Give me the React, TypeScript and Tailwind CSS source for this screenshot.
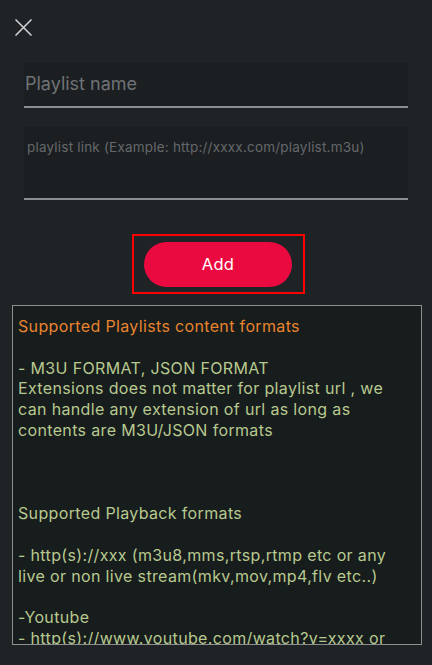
import { useState } from "react";

const contentLines: { text: string; orange?: boolean }[] = [
  { text: "Supported Playlists content formats", orange: true },
  { text: "" },
  { text: "- M3U FORMAT, JSON FORMAT" },
  { text: "Extensions does not matter for playlist url , we" },
  { text: "can handle any extension of url as long as" },
  { text: "contents are M3U/JSON formats" },
  { text: "" },
  { text: "" },
  { text: "" },
  { text: "Supported Playback formats" },
  { text: "" },
  { text: "- http(s)://xxx (m3u8,mms,rtsp,rtmp etc or any" },
  { text: "live or non live stream(mkv,mov,mp4,flv etc..)" },
  { text: "" },
  { text: "-Youtube" },
  { text: "- http(s)://www.youtube.com/watch?v=xxxx or" },
];

export default function App() {
  const [name, setName] = useState("");
  const [link, setLink] = useState("");

  return (
    <div className="w-full h-[665px] bg-[#1f2326] flex flex-col overflow-hidden font-[Inter,'Liberation_Sans',sans-serif]">
      {/* close */}
      <div className="pt-[19px] pl-[15px] h-[63px]">
        <button aria-label="Close" className="block w-[17px] h-[17px]">
          <svg width="17" height="17" viewBox="0 0 17 17" fill="none">
            <path d="M0.5 0.5L16.5 16.5M16.5 0.5L0.5 16.5" stroke="#d4d6d8" strokeWidth="1.5" />
          </svg>
        </button>
      </div>

      {/* inputs */}
      <div className="mx-[24px] flex flex-col">
        <input
          value={name}
          onChange={(e) => setName(e.target.value)}
          placeholder="Playlist name"
          className="h-[45px] bg-[#1b1f21] border-b-2 border-[#8b8e91] pl-[1px] pb-[2px] text-[18px] text-white placeholder:text-[#6f7276] outline-none"
        />
        <div className="h-[19px]" />
        <div className="h-[73px] bg-[#1b1f21] border-b-2 border-[#8b8e91] pt-[7px] pl-[3px]">
          <input
            value={link}
            onChange={(e) => setLink(e.target.value)}
            placeholder="playlist link (Example: http://xxxx.com/playlist.m3u)"
            className="w-full bg-transparent text-[13.5px] tracking-[0.2px] text-white placeholder:text-[#65686c] outline-none"
          />
        </div>
      </div>

      {/* add button */}
      <div className="flex justify-center pt-[34px] pl-[4px]">
        <div className="w-[173px] h-[60px] border-2 border-[#ff0000] flex items-center justify-center">
          <button className="w-[148px] h-[45px] rounded-full bg-[#ea0a40] text-white text-[16.5px] tracking-[0.3px]">
            Add
          </button>
        </div>
      </div>

      {/* info box */}
      <div className="mt-[11px] ml-[12px] w-[410px] h-[340px] border-[1.5px] border-[#8c8e90] bg-[#171c1d] overflow-hidden pt-[10px] pl-[5px]">
        {contentLines.map((l, i) => (
          <div
            key={i}
            className={`h-[20.8px] leading-[20.8px] text-[16px] tracking-[0.35px] whitespace-nowrap ${
              l.orange ? "text-[#e8842d]" : "text-[#b7c98f]"
            }`}
          >
            {l.text || "\u00a0"}
          </div>
        ))}
      </div>
    </div>
  );
}
